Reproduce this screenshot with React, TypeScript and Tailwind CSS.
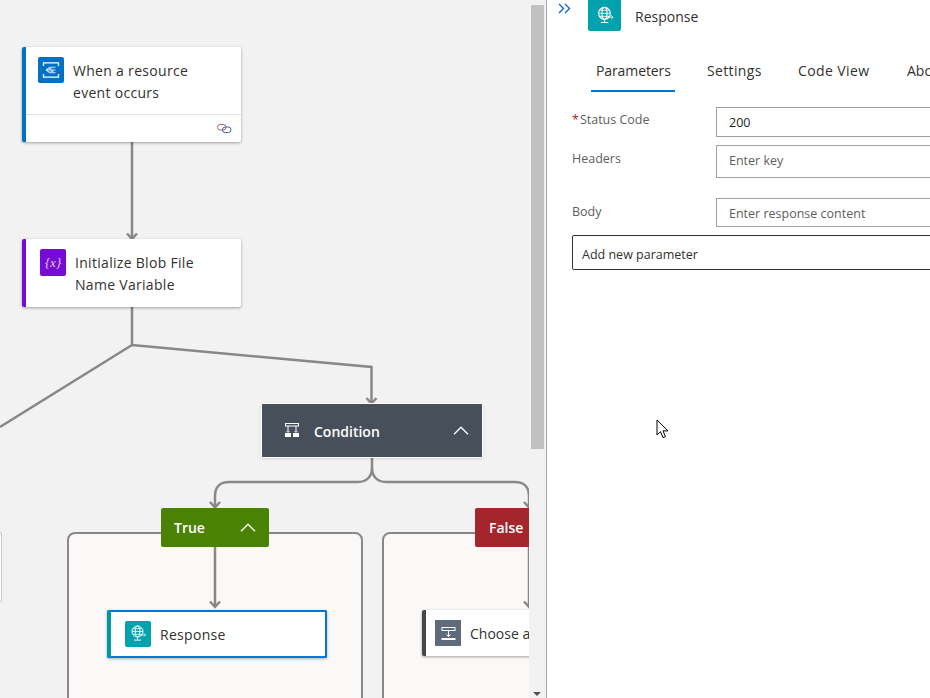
import React from 'react';

const GlobeIcon = ({ size }: { size: number }) => (
  <svg width={size} height={size} viewBox="0 0 26 26" fill="none" stroke="#fff" strokeWidth="1">
    <circle cx="12.5" cy="10.500" r="5.500" />
    <ellipse cx="12.5" cy="10.500" rx="2.400" ry="5.500" />
    <path d="M7 10.500h11M8 7.700h9M8 13.300h9" strokeWidth="0.8" />
    <path d="M12.5 16v2.500M9 19.100h7" />
    <path d="M15.500 14h5M19 12.500l1.500 1.500L19 15.500" strokeWidth="0.8" />
  </svg>
);

const EventIcon = () => (
  <svg width="26" height="26" viewBox="0 0 26 26" fill="none">
    <path d="M5.500 9V5.800h15V9M5.500 17v3.200h15V17" stroke="#fff" strokeWidth="1.300" />
    <path d="M8 13l4-2.700h5.500M9 13h8.500M8 13l4 2.700h5.500" stroke="#cde4f6" strokeWidth="1.100" />
    <circle cx="12" cy="11.500" r="1.500" fill="#a9d3f2" />
    <circle cx="14" cy="14" r="1.500" fill="#a9d3f2" />
  </svg>
);

const ConditionIcon = () => (
  <svg width="17" height="17" viewBox="0 0 17 17" fill="none" stroke="#fff">
    <rect x="1.500" y="1.500" width="13" height="2.500" strokeWidth="1" />
    <path d="M4 4v6M12 4v6" strokeWidth="1" />
    <rect x="1" y="11" width="6" height="4" fill="#fff" stroke="none" />
    <rect x="9" y="11" width="6" height="4" fill="#fff" stroke="none" />
    <path d="M2.500 9l1.500 1.500L5.500 9M10.500 9l1.500 1.500L13.500 9" strokeWidth="0.8" />
  </svg>
);

const ChooseIcon = () => (
  <svg width="26" height="26" viewBox="0 0 26 26" fill="none" stroke="#fff">
    <rect x="7" y="7.500" width="13" height="3" strokeWidth="1" />
    <path d="M13.500 10.500v6M11.500 14.500l2 2 2-2" strokeWidth="1" />
    <rect x="6.500" y="18" width="14" height="2" fill="#fff" stroke="none" />
  </svg>
);

const Chevron = () => (
  <svg width="16" height="9" viewBox="0 0 16 9" fill="none" stroke="#fff" strokeWidth="1.3">
    <path d="M1 8.200 8 1.200l7 7" />
  </svg>
);

const Connectors = () => (
  <svg className="absolute inset-0" width="529" height="698" fill="none" stroke="#8a8886" strokeWidth="2.500">
    <path d="M132 142v97M127 233.500l5 5.500 5-5.500" />
    <path d="M132 307v38M132 345 0 427M132 345l239.500 22v36M366.500 398l5 5.500 5-5.500" />
    <path d="M372 457v11c0 8-5 14-14 14H229c-9 0-14 5-14 14v11M210 502l5 5.500 5-5.500" />
    <path d="M372 468c0 8 5 14 14 14h129c9 0 14 5 14 14v11M524 502l5 5.500 5-5.500" />
    <path d="M215 547v60M210 601.500l5 5.500 5-5.500" />
    <path d="M529 547v60M524 601.500l5 5.500 5-5.500" />
  </svg>
);

const FormRow = ({ label, required, value, muted, rowClass, labelClass, inputClass }: {
  label: string;
  required?: boolean;
  value: string;
  muted?: boolean;
  rowClass: string;
  labelClass: string;
  inputClass: string;
}) => (
  <div className={`flex ${rowClass}`}>
    <div className={`w-[144px] shrink-0 text-[12.5px] text-[#605e5c] ${labelClass}`}>
      {required && <span className="text-[#a4262c] mr-[1px]">*</span>}
      {label}
    </div>
    <div className={`w-[300px] shrink-0 border border-[#a19f9d] flex items-center pl-[12px] text-[12.5px] ${muted ? 'text-[#605e5c]' : 'text-[#201f1e]'} ${inputClass}`}>
      {value}
    </div>
  </div>
);

export default function App() {
  return (
    <div className="flex w-[930px] h-[698px] overflow-hidden bg-white font-['Open_Sans',sans-serif]">
      {/* designer canvas */}
      <div className="relative w-[529px] h-full shrink-0 overflow-hidden bg-[#f2f2f2]">
        <div className="absolute left-[67px] top-[532px] w-[296px] h-[180px] rounded-[8px] border-2 border-[#8a8886] bg-[#faf9f8]" />
        <div className="absolute left-[382px] top-[532px] w-[295px] h-[180px] rounded-[8px] border-2 border-[#8a8886] bg-[#faf9f8]" />
        <Connectors />

        <div className="absolute left-[-10px] top-[532px] w-[12px] h-[70px] bg-white border border-[#c8c6c4] rounded-[2px]" />

        <div className="absolute left-[22px] top-[47px] w-[219px] h-[95px] bg-white border-l-4 border-[#0072c6] rounded-[2px] shadow-[0_1px_3px_rgba(0,0,0,0.35)] flex flex-col">
          <div className="flex-1 flex items-start pl-[12px] pt-[10px] gap-[9px]">
            <div className="w-[26px] h-[26px] rounded-[2px] bg-[#0072c6] shrink-0"><EventIcon /></div>
            <div className="text-[14px] leading-[22px] font-medium tracking-[0.3px] text-[#323130] pt-[3px]">When a resource<br />event occurs</div>
          </div>
          <div className="h-[28px] border-t border-[#e1dfdd] flex items-center justify-end pr-[9px]">
            <svg width="15" height="11" viewBox="0 0 15 11" fill="none" strokeWidth="1">
              <rect x="0.500" y="1.500" width="8.500" height="5.500" rx="2.700" stroke="#a4626a" />
              <rect x="5.500" y="4" width="8.500" height="5.500" rx="2.700" stroke="#3a5fa8" />
            </svg>
          </div>
        </div>

        <div className="absolute left-[22px] top-[239px] w-[219px] h-[68px] bg-white border-l-4 border-[#770bd6] rounded-[2px] shadow-[0_1px_3px_rgba(0,0,0,0.35)] flex items-start pl-[14px] pt-[10px] gap-[9px]">
          <div className="w-[26px] h-[27px] rounded-[2px] bg-[#770bd6] shrink-0 flex items-center justify-center text-[#e4d0f7] text-[13px] font-['Liberation_Serif',serif] italic">{'{x}'}</div>
          <div className="text-[14px] leading-[22px] font-medium tracking-[0.3px] text-[#323130] pt-[3px]">Initialize Blob File<br />Name Variable</div>
        </div>

        <div className="absolute left-[261px] top-[403px] w-[222px] h-[55px] bg-[#474f5a] border border-white shadow-sm flex items-center pl-[22px] pr-[13px]">
          <ConditionIcon />
          <span className="ml-[13px] pt-[1px] text-[14px] font-semibold text-white flex-1">Condition</span>
          <Chevron />
        </div>

        <div className="absolute left-[161px] top-[508px] w-[108px] h-[39px] rounded-[2px] bg-[#498205] flex items-center pl-[13px] pr-[13px] justify-between text-[14px] font-semibold text-white">
          True
          <Chevron />
        </div>
        <div className="absolute left-[475px] top-[508px] w-[108px] h-[39px] rounded-[2px] bg-[#a4262c] flex items-center pl-[14px] text-[14px] font-semibold text-white">False</div>

        <div className="absolute left-[107px] top-[610px] w-[220px] h-[48px] bg-white border-2 border-[#0078d4] border-l-[#0097a7] border-l-4 rounded-[2px] shadow-[0_1px_3px_rgba(0,0,0,0.3)] flex items-center pl-[14px] gap-[9px]">
          <div className="w-[26px] h-[26px] rounded-[2px] bg-[#00a2ad] shrink-0"><GlobeIcon size={26} /></div>
          <span className="text-[14px] tracking-[0.3px] text-[#323130]">Response</span>
        </div>

        <div className="absolute left-[422px] top-[610px] w-[220px] h-[46px] bg-white border-l-4 border-[#474747] rounded-[2px] shadow-[0_1px_3px_rgba(0,0,0,0.35)] flex items-center pl-[9px] gap-[9px]">
          <div className="w-[26px] h-[26px] bg-[#5d6b7a] shrink-0"><ChooseIcon /></div>
          <span className="text-[14px] text-[#323130] whitespace-nowrap">Choose an operation</span>
        </div>
      </div>

      {/* canvas scrollbar */}
      <div className="relative w-[18px] h-full shrink-0 bg-[#f2f2f2] border-r border-[#a8a8a8] pl-[2px] pr-[2px] pt-[5px]">
        <div className="w-[13px] h-[444px] bg-[#c1c1c1]" />
        <div className="absolute left-[4px] bottom-[2px] w-0 h-0 border-l-[4px] border-r-[4px] border-t-[4px] border-l-transparent border-r-transparent border-t-[#505050]" />
      </div>

      {/* details panel */}
      <div className="relative flex-1 min-w-0 h-full overflow-hidden bg-white">
        <div className="flex h-[31px] items-start">
          <svg className="ml-[11px] mt-[3px] shrink-0" width="13" height="11" viewBox="0 0 13 11" fill="none" stroke="#0f6cbd" strokeWidth="1.400">
            <path d="M1 1l4.500 4.500L1 10M7 1l4.500 4.500L7 10" />
          </svg>
          <div className="ml-[17px] w-[33px] h-[31px] rounded-b-[2px] bg-[#00a2ad] shrink-0 flex items-center justify-center"><GlobeIcon size={28} /></div>
          <span className="ml-[14px] mt-[6px] text-[14px] text-[#323130]">Response</span>
        </div>

        <div className="flex ml-[44px] mt-[27px] h-[34px] gap-[20px] text-[14px] text-[#323130] whitespace-nowrap">
          <div className="w-[84px] h-[34px] border-b-2 border-[#0078d4] pl-[5px] pt-[2px] shrink-0 tracking-[-0.1px]">Parameters</div>
          <div className="pl-[12px] w-[71px] pt-[2px] shrink-0 tracking-[0.35px]">Settings</div>
          <div className="pl-[12px] pt-[2px] shrink-0 w-[101px] tracking-[0.4px]">Code View</div>
          <div className="pt-[2px] shrink-0">About</div>
        </div>

        <div className="ml-[25px] mt-[15px] w-[500px]">
          <FormRow label="Status Code" required value="200" rowClass="h-[29px]" labelClass="pt-[4px]" inputClass="h-[30px] pt-[2px]" />
          <FormRow label="Headers" value="Enter key" muted rowClass="mt-[9px] h-[33px]" labelClass="pt-[5px]" inputClass="h-[33px]" />
          <FormRow label="Body" value="Enter response content" muted rowClass="mt-[20px] h-[29px]" labelClass="pt-[5px]" inputClass="h-[29px] pt-[3px]" />
          <div className="mt-[8px] w-[400px] h-[35px] border border-[#323130] rounded-[2px] flex items-center pl-[9px] pt-[5px] text-[12.5px] text-[#323130]">Add new parameter</div>
        </div>

        <svg className="absolute left-[109px] top-[419px]" width="14" height="21" viewBox="0 0 14 21">
          <path d="M1 1v15l3.500-3.300 2.500 6 2.500-1-2.500-5.800h5z" fill="#fff" stroke="#000" strokeWidth="1" />
        </svg>
      </div>
    </div>
  );
}
